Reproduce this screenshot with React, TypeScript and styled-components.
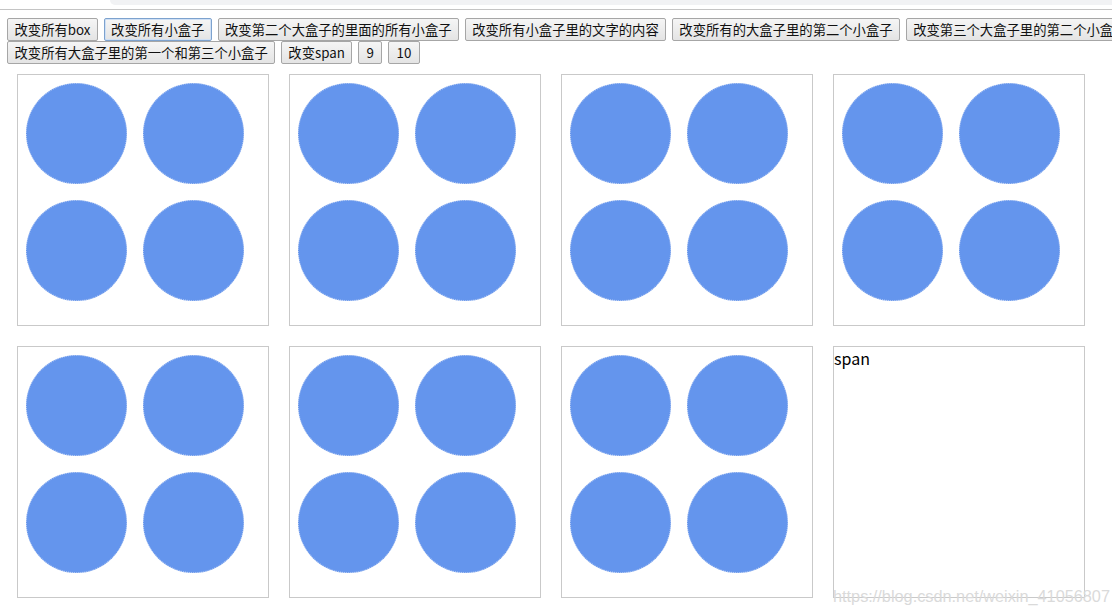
import React from "react";
import styled, { createGlobalStyle } from "styled-components";

const GlobalStyle = createGlobalStyle`
  html, body {
    margin: 0;
    padding: 0;
    background: #ffffff;
    overflow: hidden;
  }
  body {
    font-family: "Noto Sans CJK SC", "Noto Sans", sans-serif;
    color: #000;
  }
`;

const Page = styled.div`
  position: relative;
  width: 1112px;
  height: 615px;
  overflow: hidden;
`;

const Chrome = styled.div`
  height: 9px;
  border-bottom: 1px solid #c4c4c4;
  display: flex;
  justify-content: flex-end;
`;

const ChromeTab = styled.div`
  width: 1002px;
  height: 5px;
  background: #f1f2f4;
  border-bottom-left-radius: 9px;
`;

const Content = styled.div`
  padding: 8px 0 0 7px;
  width: 1250px;
`;

const Toolbar = styled.div`
  display: flex;
  flex-wrap: wrap;
  column-gap: 5.6px;
  row-gap: 0;
  width: 1200px;
`;

const Button = styled.button<{ $focused?: boolean; $narrow?: boolean }>`
  box-sizing: border-box;
  height: 23px;
  padding: 0 ${(p) => (p.$narrow ? "7.5px" : "6.5px")};
  margin: 0;
  font-family: "Noto Sans CJK SC", "Noto Sans", sans-serif;
  font-size: 13.333px;
  line-height: 21px;
  color: #111;
  border: 1px solid ${(p) => (p.$focused ? "#7da2ce" : "#a6a6a6")};
  border-radius: 2px;
  background: linear-gradient(#f5f5f5, #e4e4e4);
  box-shadow: ${(p) => (p.$focused ? "inset 0 0 0 1px #cfe0f5" : "none")};
  white-space: nowrap;
  cursor: default;
`;

const Grid = styled.div`
  display: grid;
  grid-template-columns: repeat(4, 252px);
  grid-auto-rows: 252px;
  gap: 20px;
  padding: 10px;
`;

const BigBox = styled.div`
  box-sizing: border-box;
  width: 252px;
  height: 252px;
  border: 1px solid #c9c9c9;
  display: flex;
  flex-wrap: wrap;
  align-content: flex-start;
  padding: 0;
`;

const SmallBox = styled.div`
  box-sizing: border-box;
  width: 101px;
  height: 101px;
  margin: 8px;
  border-radius: 50%;
  background: #6495ed;
  border: 1px dotted #a9c2f2;
`;

const SpanText = styled.span`
  font-family: "Noto Sans CJK SC", "Noto Sans", sans-serif;
  font-size: 16px;
  line-height: 22px;
  color: #000;
`;

const Watermark = styled.div`
  position: absolute;
  left: 833px;
  top: 587px;
  font-family: "Liberation Sans", Arial, sans-serif;
  font-size: 16.3px;
  color: #dadada;
  white-space: nowrap;
  pointer-events: none;
`;

const buttons = [
  "改变所有box",
  "改变所有小盒子",
  "改变第二个大盒子的里面的所有小盒子",
  "改变所有小盒子里的文字的内容",
  "改变所有的大盒子里的第二个小盒子",
  "改变第三个大盒子里的第二个小盒子",
  "改变所有大盒子里的第一个和第三个小盒子",
  "改变span",
  "9",
  "10",
];

export default function App() {
  return (
    <>
      <GlobalStyle />
      <Page>
        <Chrome>
          <ChromeTab />
        </Chrome>
        <Content>
          <Toolbar>
            {buttons.map((b, i) => (
              <Button key={i} $focused={i === 1} $narrow={b.length <= 2}>
                {b}
              </Button>
            ))}
          </Toolbar>
          <Grid>
            {Array.from({ length: 7 }).map((_, i) => (
              <BigBox key={i}>
                {Array.from({ length: 4 }).map((_, j) => (
                  <SmallBox key={j} />
                ))}
              </BigBox>
            ))}
            <BigBox>
              <SpanText>span</SpanText>
            </BigBox>
          </Grid>
        </Content>
        <Watermark>https://blog.csdn.net/weixin_41056807</Watermark>
      </Page>
    </>
  );
}
